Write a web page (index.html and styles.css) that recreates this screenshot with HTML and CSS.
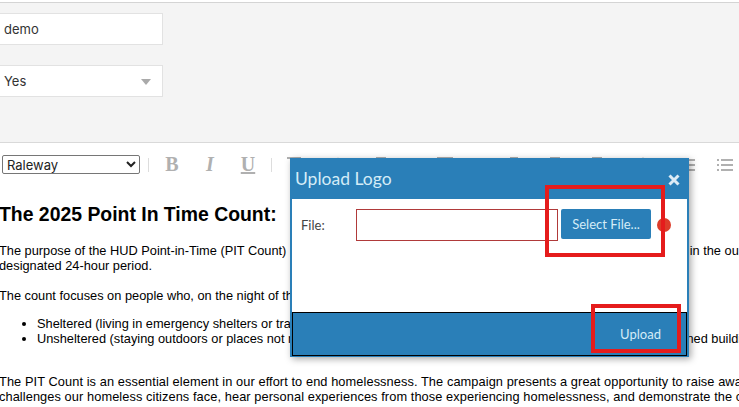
FILE: index.html
```html
<!DOCTYPE html>
<html lang="en">
<head>
    <meta charset="UTF-8">
    <title>Upload Logo</title>
    <link rel="stylesheet" href="styles.css">
</head>
<body>
    <div class="fields">
        <div class="field">demo</div>
        <div class="field">Yes<span class="caret"></span></div>
    </div>

    <div class="toolbar">
        <select class="font-select"><option>Raleway</option></select>
        <span class="sep"></span>
        <span class="tool">B</span>
        <span class="tool tool-i">I</span>
        <span class="tool tool-u">U</span>
        <span class="sep"></span>
        <div class="tool-row">
            <svg class="tool-icon" viewBox="0 0 16 16"><path d="M0 1h14M7 1v14"/></svg>
            <svg class="tool-icon" viewBox="0 0 16 16"><path d="M8 1 3 14M8 1l5 13"/></svg>
            <svg class="tool-icon" viewBox="0 0 16 16"><path d="M3 1h10M8 1v14"/></svg>
            <svg class="tool-icon" viewBox="0 0 16 16"><path d="M1 1h14v12H1z"/></svg>
            <svg class="tool-icon" viewBox="0 0 16 16"><path d="M3 1h8M3 7h8M3 13h8"/></svg>
            <svg class="tool-icon" viewBox="0 0 16 16"><path d="M2 1h10M2 7h10M2 13h10"/></svg>
            <svg class="tool-icon" viewBox="0 0 16 16"><path d="M2 1h10M2 7h10M2 13h10"/></svg>
            <svg class="tool-icon" viewBox="0 0 16 16"><path d="M8 1 4 7M8 1l4 6"/></svg>
            <svg class="tool-icon" viewBox="0 0 16 16"><path d="M0 3h15M0 8h15M0 13h15"/></svg>
            <svg class="tool-icon" viewBox="0 0 16 16"><path d="M4 3h12M4 8h12M4 13h12M0 3h2M0 8h2M0 13h2"/></svg>
        </div>
    </div>

    <div class="doc">
        <h2>The 2025 Point In Time Count:</h2>
        <p>The purpose of the HUD Point-in-Time (PIT Count) is to provide a current snapshot of people experiencing homelessness in the our community during a<br>designated 24-hour period.</p>
        <p>The count focuses on people who, on the night of the count, are in one of these two situations:</p>
        <ul>
            <li>Sheltered (living in emergency shelters or transitional housing programs)</li>
            <li>Unsheltered (staying outdoors or places not meant for human habitation, such as cars, city parks, trucks or abandoned buildings)</li>
        </ul>
        <p class="wide">The PIT Count is an essential element in our effort to end homelessness. The campaign presents a great opportunity to raise awareness of the<br>challenges our homeless citizens face, hear personal experiences from those experiencing homelessness, and demonstrate the commitment of<br>of the City of Sacramento and our partners to make sure homelessness is rare, brief and one-time in our region.</p>
    </div>

    <div class="modal">
        <div class="modal-head">
            <span>Upload Logo</span>
            <svg class="modal-close" viewBox="0 0 12 12"><path d="M1.5 1.5l9 9M10.5 1.5l-9 9"/></svg>
        </div>
        <div class="modal-body">
            <label class="file-label">File:</label>
            <div class="file-input"></div>
            <button class="select-btn">Select File...</button>
            <span class="dot"></span>
        </div>
        <div class="modal-foot">
            <button class="upload-btn">Upload</button>
        </div>
    </div>

    <!-- red annotation boxes -->
    <div class="mark mark-select"></div>
    <div class="mark mark-upload"></div>
</body>
</html>
```

FILE: styles.css
```css
html, body { height: 100%; }
body { margin: 0; overflow: hidden; position: relative; background: #fff; font-family: "Liberation Sans", Arial, sans-serif; color: #000; }

.fields { margin-top: 2px; padding-top: 10px; box-sizing: border-box; height: 141px; background: #f4f4f4; border-top: 1px solid #d4d4d4; border-bottom: 1px solid #d9d9d9; }
.field { width: 163px; height: 32px; margin-bottom: 20px; padding-left: 4px; box-sizing: border-box; background: #fff; border: 1px solid #e2e2e2; border-left: 0; font: 13px/30px Inter, sans-serif; color: #333; position: relative; }
.caret { position: absolute; right: 11px; top: 13px; border: 5px solid transparent; border-top: 6px solid #aaa; border-bottom: 0; }

.toolbar { display: flex; align-items: center; height: 19px; margin: 12px 0 0 2px; }
.font-select { width: 138px; height: 19px; font: 13px Inter, sans-serif; padding: 0; border: 1px solid #767676; border-radius: 2px; background: #fff; color: #222; }
.sep { width: 1px; height: 14px; background: #ddd; margin: 0 4px 0 8px; }
.tool + .sep { margin-left: 4px; }
.tool { width: 38px; text-align: center; font: bold 20px/19px "Liberation Serif", serif; color: #b0b0b0; }
.tool-i { font-style: italic; }
.tool-u { text-decoration: underline; }
.tool-row { display: grid; grid-template-columns: 43px 43px 64px 70px 41px 42px 45px 45px 37px 16px; margin-left: 11px; }
.tool-icon { width: 16px; height: 16px; fill: none; stroke: #b0b0b0; stroke-width: 2; }

.doc { margin-left: -1px; padding-top: 29px; font-size: 12.8px; line-height: 15px; white-space: nowrap; overflow: hidden; }
.doc h2 { margin: 0 0 17px; font-size: 19.4px; line-height: 23px; }
.doc p { margin: 0 0 15px; }
.doc ul { margin: -2px 0 28px; padding-left: 38px; }
.doc .wide { letter-spacing: .08px; }

.modal { position: absolute; left: 290px; top: 158px; width: 399px; height: 199px; box-sizing: border-box; display: flex; flex-direction: column; background: #fff; border: 2px solid #2a7fb8; border-bottom-width: 1px; box-shadow: 2px 2px 7px rgba(0,0,0,.35); }
.modal-head { height: 39px; flex: none; display: flex; justify-content: space-between; align-items: center; padding: 0 7px 3px 3px; box-sizing: border-box; background: #2a7fb8; color: #d4ecf7; font: 17.5px Lato, sans-serif; }
.modal-close { width: 12px; height: 12px; margin-top: 3px; fill: none; stroke: #dcebf5; stroke-width: 3; }
.modal-body { flex: 1; display: flex; align-items: flex-start; padding: 10px 0 0 9px; font: 13px Lato, sans-serif; color: #444; }
.file-label { width: 55px; line-height: 32px; }
.file-input { width: 202px; height: 32px; box-sizing: border-box; border: 1px solid #b03a3a; }
.select-btn { width: 90px; height: 30px; margin-left: 3px; border: 0; border-radius: 2px; background: #2a7fb8; color: #d4ecf7; font: 13px Lato, sans-serif; }
.dot { width: 14px; height: 14px; margin: 9px 0 0 6px; border-radius: 50%; background: #dd3c2a; }
.modal-foot { height: 44px; flex: none; display: flex; justify-content: flex-end; box-sizing: border-box; background: #2a7fb8; border: 1px solid #000; }
.upload-btn { width: 91px; border: 0; background: transparent; color: #d4ecf7; font: 13px Lato, sans-serif; }

.mark { position: absolute; box-sizing: border-box; border: 4px solid #e51c1c; }
.mark-select { left: 545px; top: 185px; width: 120px; height: 72px; }
.mark-upload { left: 591px; top: 304px; width: 90px; height: 49px; }
```
